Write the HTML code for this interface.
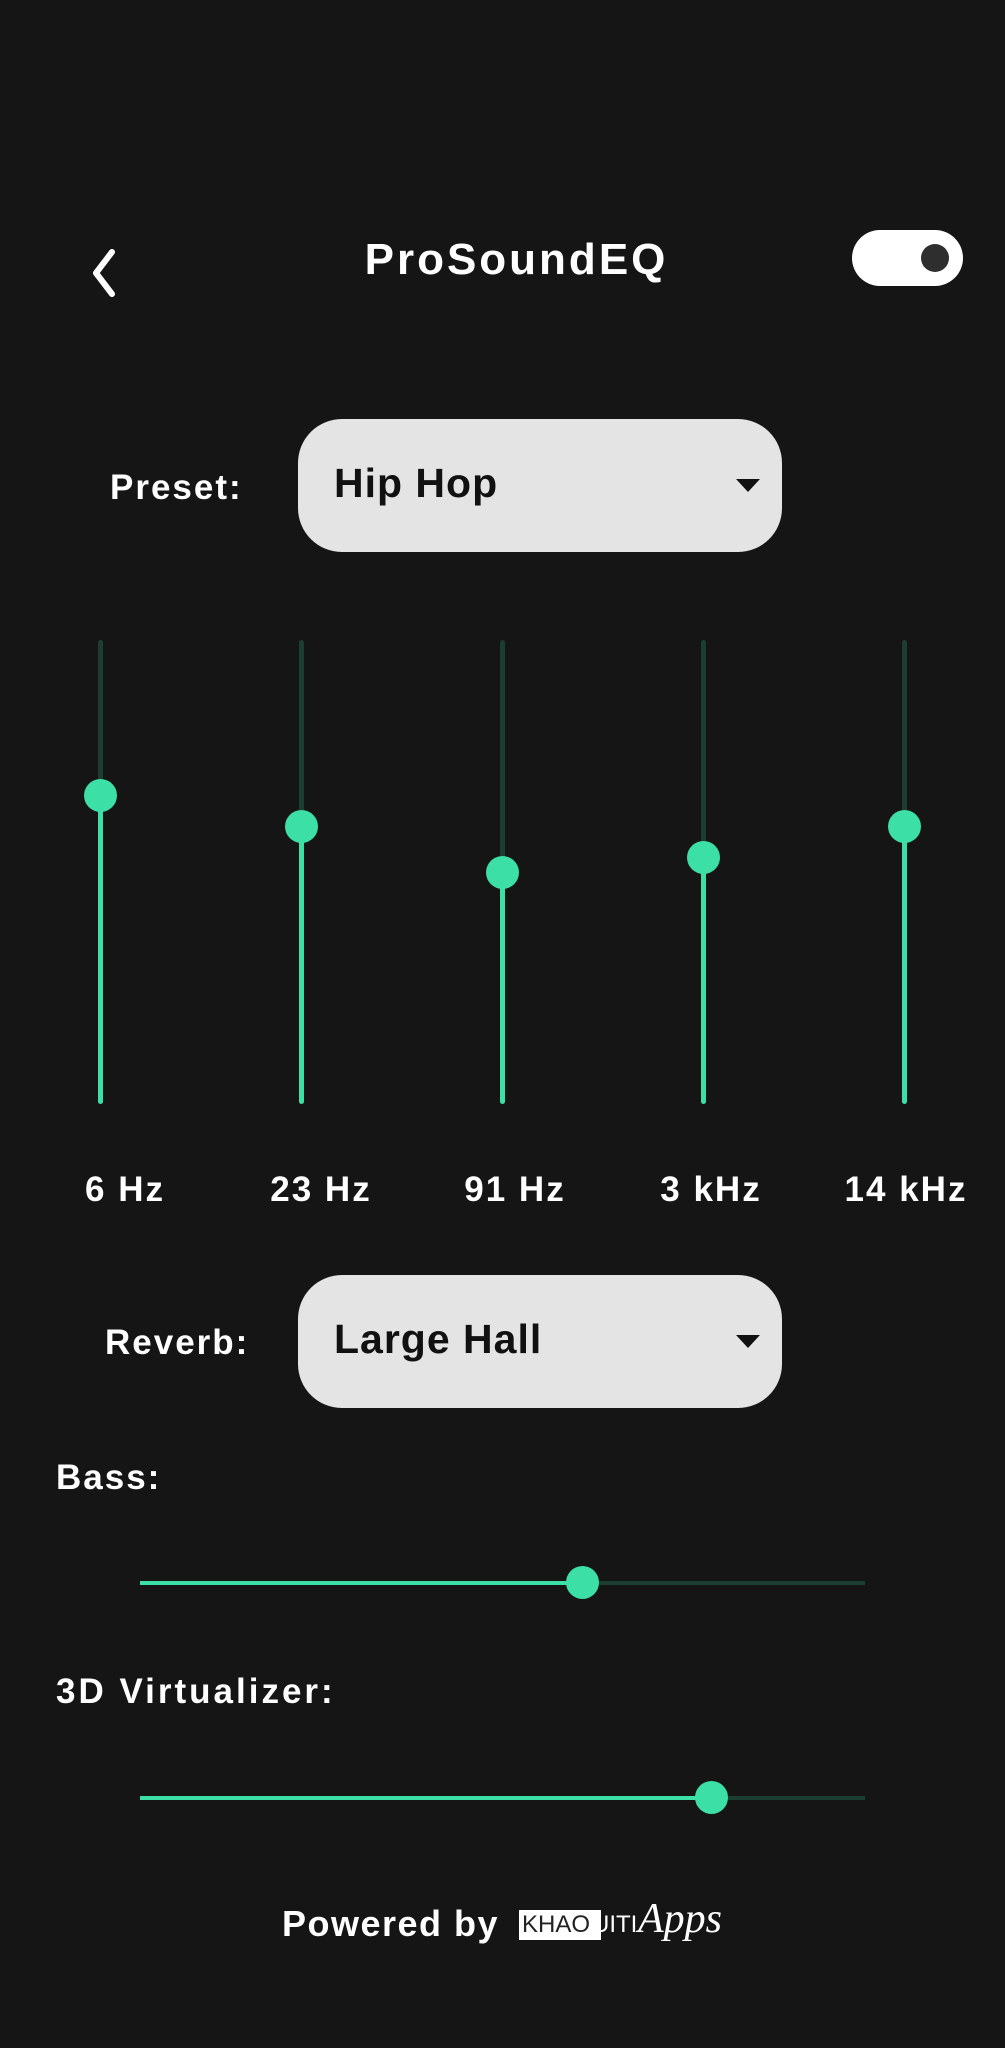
<!DOCTYPE html>
<html><head><meta charset="utf-8"><style>
*{margin:0;padding:0;box-sizing:border-box}
body{width:1005px;height:2048px;background:#151515;position:relative;overflow:hidden;font-family:"Liberation Sans",sans-serif;font-weight:bold;color:#fff;letter-spacing:2px}
.a{position:absolute}
.t{position:absolute;white-space:nowrap;line-height:1}
.dd{position:absolute;left:298px;width:484px;height:133px;background:#e4e4e4;border-radius:44px;color:#111}
.dd span{position:absolute;left:36px;top:44px;font-size:41px;line-height:1;letter-spacing:1px}
.dd i{position:absolute;right:22px;top:60px;width:0;height:0;border-left:12px solid transparent;border-right:12px solid transparent;border-top:13px solid #111}
.vt{position:absolute;top:640px;height:464px;width:5px;background:#1c3e32;border-radius:3px}
.va{position:absolute;width:5px;background:#3ce0a6;border-radius:3px}
.th{position:absolute;width:33px;height:33px;border-radius:50%;background:#3ce0a6}
.hl{position:absolute;left:140px;width:725px;height:4px;background:#1c3e32}
.hla{position:absolute;left:140px;height:4px;background:#3ce0a6}
.lb{position:absolute;top:1172px;font-size:35px;line-height:1;width:180px;text-align:center}
</style></head><body>
<svg class="a" style="left:86px;top:248px" width="34" height="50" viewBox="0 0 34 50"><path d="M26 4 L10 25 L26 46" fill="none" stroke="#fff" stroke-width="6" stroke-linecap="round" stroke-linejoin="round"/></svg>
<div class="t" style="left:14px;width:1005px;text-align:center;top:238px;font-size:44px;letter-spacing:3px">ProSoundEQ</div>
<div class="a" style="left:852px;top:230px;width:111px;height:56px;border-radius:28px;background:#fff"></div>
<div class="a" style="left:921px;top:244px;width:28px;height:28px;border-radius:50%;background:#2e2e2e"></div>

<div class="t" style="left:110px;top:470px;font-size:35px">Preset:</div>
<div class="dd" style="top:419px"><span>Hip Hop</span><i></i></div>

<div class="vt" style="left:98px"></div><div class="va" style="left:98px;top:795px;height:309px"></div><div class="th" style="left:84px;top:779px"></div>
<div class="vt" style="left:299px"></div><div class="va" style="left:299px;top:826px;height:278px"></div><div class="th" style="left:285px;top:810px"></div>
<div class="vt" style="left:500px"></div><div class="va" style="left:500px;top:872px;height:232px"></div><div class="th" style="left:486px;top:856px"></div>
<div class="vt" style="left:701px"></div><div class="va" style="left:701px;top:857px;height:247px"></div><div class="th" style="left:687px;top:841px"></div>
<div class="vt" style="left:902px"></div><div class="va" style="left:902px;top:826px;height:278px"></div><div class="th" style="left:888px;top:810px"></div>

<div class="lb" style="left:35px">6 Hz</div>
<div class="lb" style="left:231px">23 Hz</div>
<div class="lb" style="left:425px">91 Hz</div>
<div class="lb" style="left:621px">3 kHz</div>
<div class="lb" style="left:816px">14 kHz</div>

<div class="t" style="left:105px;top:1325px;font-size:35px">Reverb:</div>
<div class="dd" style="top:1275px"><span>Large Hall</span><i></i></div>

<div class="t" style="left:56px;top:1460px;font-size:35px">Bass:</div>
<div class="hl" style="top:1581px"></div><div class="hla" style="top:1581px;width:443px"></div>
<div class="th" style="left:566px;top:1566px"></div>

<div class="t" style="left:56px;top:1674px;font-size:35px;letter-spacing:3px">3D Virtualizer:</div>
<div class="hl" style="top:1796px"></div><div class="hla" style="top:1796px;width:572px"></div>
<div class="th" style="left:695px;top:1781px"></div>

<div class="t" style="left:282px;top:1906px;font-size:36px;letter-spacing:1.5px">Powered by</div>
<div class="a" style="left:519px;top:1910px;width:82px;height:30px;background:#fff"></div>
<div class="t" style="left:522px;top:1913px;font-size:24px;font-weight:normal;color:#222;letter-spacing:0">KHAO</div>
<div class="t" style="left:592px;top:1913px;font-size:24px;font-weight:normal;color:#fff;letter-spacing:0">UITI</div>
<div class="t" style="left:638px;top:1898px;font-size:42px;font-style:italic;font-weight:normal;font-family:'Liberation Serif',serif;letter-spacing:0">Apps</div>
</body></html>
